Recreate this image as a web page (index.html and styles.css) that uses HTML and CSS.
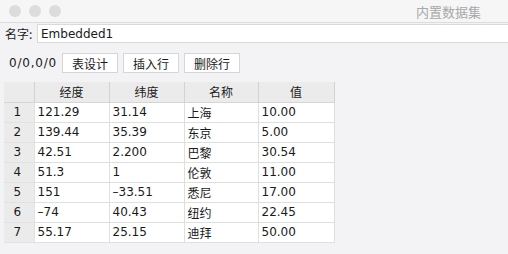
FILE: index.html
```html
<!DOCTYPE html>
<html lang="zh">

<head>
    <meta charset="UTF-8">
    <title>内置数据集</title>
    <link rel="stylesheet" href="styles.css">
</head>

<body>
    <div class="titlebar">
        <span class="dot"></span>
        <span class="dot"></span>
        <span class="dot"></span>
        <span class="title">内置数据集</span>
    </div>

    <div class="name-row">
        <label for="name">名字:</label>
        <input id="name" class="name-input" type="text" value="Embedded1">
    </div>

    <div class="toolbar">
        <span class="counter">0/0,0/0</span>
        <button class="btn">表设计</button>
        <button class="btn">插入行</button>
        <button class="btn">删除行</button>
    </div>

    <table class="grid">
        <colgroup>
            <col class="col-num">
            <col class="col-a">
            <col class="col-b">
            <col class="col-c">
            <col class="col-d">
        </colgroup>
        <thead>
            <tr>
                <th></th>
                <th>经度</th>
                <th>纬度</th>
                <th>名称</th>
                <th>值</th>
            </tr>
        </thead>
        <tbody id="rows"></tbody>
    </table>

    <script>
        const data = [
            ['121.29', '31.14', '上海', '10.00'],
            ['139.44', '35.39', '东京', '5.00'],
            ['42.51', '2.200', '巴黎', '30.54'],
            ['51.3', '1', '伦敦', '11.00'],
            ['151', '–33.51', '悉尼', '17.00'],
            ['–74', '40.43', '纽约', '22.45'],
            ['55.17', '25.15', '迪拜', '50.00']
        ];

        const rows = document.getElementById('rows');

        data.forEach((row, i) => {
            const tr = document.createElement('tr');
            const num = document.createElement('td');
            num.className = 'num';
            num.textContent = i + 1;
            tr.appendChild(num);
            row.forEach(value => {
                const td = document.createElement('td');
                td.textContent = value;
                tr.appendChild(td);
            });
            rows.appendChild(tr);
        });
    </script>
</body>

</html>
```

FILE: styles.css
```css
* {
    box-sizing: border-box;
}

body {
    margin: 0;
    height: 100vh;
    overflow: hidden;
    background-color: #f3f3f5;
    font-family: "DejaVu Sans", "Noto Sans CJK SC", sans-serif;
    font-size: 12px;
    color: #1a1a1a;
}

.titlebar {
    display: flex;
    align-items: center;
    gap: 8px;
    height: 23px;
    padding-left: 9px;
    background-color: #f6f6f6;
    border-bottom: 1px solid #dcdcdc;
}

.dot {
    width: 12px;
    height: 12px;
    border-radius: 50%;
    background-color: #dcdcdc;
}

.title {
    margin-left: auto;
    padding-right: 27px;
    font-family: "Noto Sans CJK SC", sans-serif;
    font-size: 13px;
    color: #a8a8a8;
}

.name-row {
    display: flex;
    align-items: center;
    margin-top: 1px;
    padding-left: 5px;
}

.name-row label {
    width: 32px;
    font-family: "Noto Sans CJK SC", sans-serif;
    font-size: 12px;
}

.name-input {
    flex: 1;
    height: 19px;
    margin: 0;
    padding: 0 3px;
    border: 1px solid #d9d9d9;
    border-right: none;
    background-color: #ffffff;
    font-family: "DejaVu Sans", sans-serif;
    font-size: 12px;
    color: #1a1a1a;
    outline: none;
}

.toolbar {
    display: flex;
    align-items: center;
    gap: 5px;
    margin-top: 10px;
    padding-left: 9px;
}

.counter {
    width: 48px;
    letter-spacing: 0.8px;
}

.btn {
    height: 20px;
    width: 56px;
    margin: 0;
    padding: 0;
    border: 1px solid #d6d6d6;
    background-color: #ffffff;
    font-family: "Noto Sans CJK SC", sans-serif;
    font-size: 12px;
    color: #1a1a1a;
}

.grid {
    margin: 9px 0 0 4px;
    border-collapse: collapse;
    table-layout: fixed;
    width: 330px;
}

.col-num { width: 30px; }
.col-a { width: 75px; }
.col-b { width: 75px; }
.col-c { width: 74px; }
.col-d { width: 76px; }

.grid th {
    height: 20px;
    padding: 0;
    background-color: #ebebeb;
    border-right: 1px solid #d2d2d2;
    border-bottom: 1px solid #d6d6d6;
    font-family: "Noto Sans CJK SC", sans-serif;
    font-weight: normal;
    font-size: 12px;
    text-align: center;
}

.grid td {
    height: 20px;
    padding: 0 3px;
    background-color: #ffffff;
    border: 1px solid #dfdfdf;
    border-top: none;
    white-space: nowrap;
    font-family: "DejaVu Sans", "Noto Sans CJK SC", sans-serif;
}

.grid td.num {
    background-color: #ebebeb;
    border-left: none;
    border-color: #e2e2e2;
    text-align: center;
    padding-left: 0;
}
```
